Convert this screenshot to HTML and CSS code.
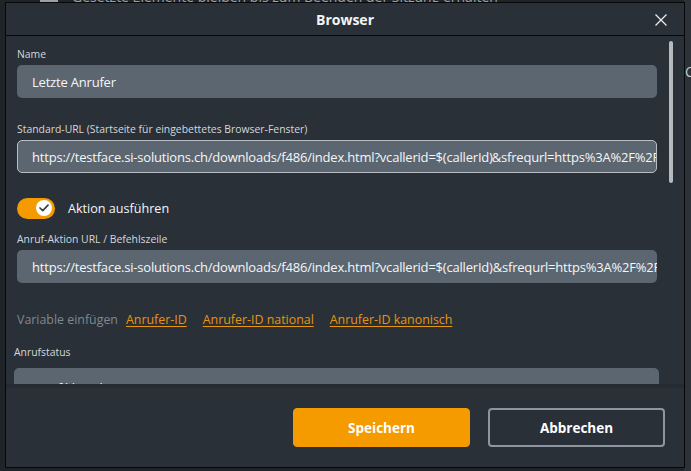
FILE: index.html
```html
<!DOCTYPE html>
<html lang="de">
<head>
<meta charset="utf-8">
<title>Browser</title>
<link rel="stylesheet" href="styles.css">
</head>
<body>
<div class="page">
  <div class="page-main">
    <div class="page-line"><span class="page-icon"></span>Gesetzte Elemente bleiben bis zum Beenden der Sitzung erhalten</div>
  </div>
  <div class="page-side"><span class="side-letter">C</span></div>
</div>

<div class="dialog">
  <div class="dlg-head">
    <span class="dlg-title">Browser</span>
    <button class="dlg-close" aria-label="Schliessen">
      <svg width="12" height="12" viewBox="0 0 12 12"><path d="M0.5 0.5 L11.5 11.5 M11.5 0.5 L0.5 11.5" stroke="#e8eaec" stroke-width="1.3" fill="none"/></svg>
    </button>
  </div>
  <div class="dlg-body">
    <div class="dlg-scroll">
      <div class="field">
        <label class="lbl">Name</label>
        <div class="input">Letzte Anrufer</div>
      </div>
      <div class="field">
        <label class="lbl">Standard-URL (Startseite für eingebettetes Browser-Fenster)</label>
        <div class="input focused">https://testface.si-solutions.ch/downloads/f486/index.html?vcallerid=$(callerId)<span class="caret"></span>&amp;sfrequrl=https%3A%2F%2Ftestface.si-solutions.ch</div>
      </div>
      <div class="toggle-row">
        <span class="toggle"><span class="knob"><svg width="10" height="8" viewBox="0 0 10 8"><path d="M1 4 L3.8 6.6 L9 1.2" stroke="#3a4048" stroke-width="1.7" fill="none" stroke-linecap="round" stroke-linejoin="round"/></svg></span></span>
        <span class="toggle-lbl">Aktion ausführen</span>
      </div>
      <div class="field">
        <label class="lbl">Anruf-Aktion URL / Befehlszeile</label>
        <div class="input">https://testface.si-solutions.ch/downloads/f486/index.html?vcallerid=$(callerId)&amp;sfrequrl=https%3A%2F%2Ftestface.si-solutions.ch</div>
      </div>
      <div class="vars">
        <span class="vars-lbl">Variable einfügen</span>
        <a class="var-link">Anrufer-ID</a>
        <a class="var-link">Anrufer-ID national</a>
        <a class="var-link">Anrufer-ID kanonisch</a>
      </div>
      <div class="field status">
        <label class="lbl">Anrufstatus</label>
        <div class="input select">
          <span>Anruf klingelt</span>
          <svg width="12" height="8" viewBox="0 0 12 8"><path d="M1 1.5 L6 6.5 L11 1.5" stroke="#c8ccd0" stroke-width="1.4" fill="none"/></svg>
        </div>
      </div>
    </div>
    <div class="scrollbar"></div>
  </div>
  <div class="dlg-foot">
    <button class="btn btn-primary">Speichern</button>
    <button class="btn btn-secondary">Abbrechen</button>
  </div>
</div>
</body>
</html>
```

FILE: styles.css
```css
* { box-sizing: border-box; }
html, body {
  margin: 0;
  padding: 0;
  width: 691px;
  height: 471px;
  overflow: hidden;
  background: #1f2428;
  font-family: "Open Sans", "Noto Sans", sans-serif;
  color: #eef0f2;
}
.page {
  display: flex;
  height: 471px;
}
.page-main {
  flex: 1;
  overflow: hidden;
}
.page-line {
  margin-top: -11px;
  padding-left: 40px;
  font-size: 14px;
  line-height: 16px;
  color: #9aa1a8;
  white-space: nowrap;
  display: flex;
  align-items: center;
  gap: 14px;
}
.page-icon {
  width: 18px;
  height: 14px;
  background: #9aa1a8;
}
.page-side {
  width: 7px;
  background: #2c3238;
  padding-top: 62px;
  overflow: hidden;
}
.side-letter {
  display: block;
  font-size: 14px;
  color: #c4c8cc;
  margin-left: 1px;
}

.dialog {
  position: absolute;
  left: 5px;
  top: 2px;
  width: 680px;
  height: 466px;
  background: #2a3038;
  border: 1px solid #060708;
  display: flex;
  flex-direction: column;
}
.dlg-head {
  height: 33px;
  flex: none;
  border-bottom: 1px solid #060708;
  display: flex;
  align-items: center;
  justify-content: center;
  position: relative;
}
.dlg-title {
  font-size: 14px;
  font-weight: 700;
  color: #f2f4f6;
}
.dlg-close {
  position: absolute;
  right: 16px;
  top: 10px;
  width: 14px;
  height: 14px;
  padding: 1px;
  border: 0;
  background: none;
  display: flex;
}
.dlg-body {
  height: 348px;
  flex: none;
  position: relative;
  overflow: hidden;
}
.dlg-scroll {
  padding: 10px 27px 0 11px;
}
.scrollbar {
  position: absolute;
  right: 11px;
  top: 5px;
  width: 4px;
  height: 142px;
  border-radius: 2px;
  background: #b5babf;
}
.field {
  display: flex;
  flex-direction: column;
}
.lbl {
  font-size: 10.4px;
  line-height: 16px;
  color: #d4d8dc;
  margin-bottom: 3px;
}
.input {
  height: 33px;
  border-radius: 5px;
  background: #5c6670;
  color: #f4f6f8;
  font-size: 13px;
  letter-spacing: -0.2px;
  padding: 0 15px;
  display: flex;
  align-items: center;
  white-space: nowrap;
  overflow: hidden;
  margin-bottom: 23px;
}
.input.focused {
  border: 1px solid #b8bec4;
  padding: 0 14px;
}
.caret {
  display: inline-block;
  width: 1px;
  height: 17px;
  background: #f4f6f8;
  margin: 0 -0.5px;
}
.toggle-row {
  display: flex;
  align-items: center;
  gap: 13px;
  height: 22px;
  margin-top: 1px;
  margin-bottom: 12px;
}
.toggle {
  width: 38px;
  height: 21px;
  border-radius: 11px;
  background: #f59b00;
  display: flex;
  align-items: center;
  justify-content: flex-end;
  padding-right: 3px;
}
.knob {
  width: 16px;
  height: 16px;
  border-radius: 50%;
  background: #ffffff;
  display: flex;
  align-items: center;
  justify-content: center;
}
.toggle-lbl {
  font-size: 12.6px;
  color: #f4f6f8;
}
.vars {
  display: flex;
  align-items: center;
  gap: 16px;
  height: 18px;
  margin-top: 4px;
  margin-bottom: 16px;
}
.vars-lbl {
  font-size: 12.4px;
  color: #7f8891;
  margin-right: -8px;
}
.var-link {
  font-size: 12.4px;
  color: #e9940a;
  text-decoration: underline;
  text-underline-offset: 2px;
  cursor: pointer;
}
.status {
  margin-left: -3px;
  margin-right: -2px;
}
.status .lbl {
  margin-bottom: 8px;
}
.select {
  height: 40px;
  justify-content: space-between;
  padding-right: 16px;
}
.dlg-foot {
  flex: 1;
  border-top: 4px solid #262b31;
  display: flex;
  justify-content: flex-end;
  align-items: flex-start;
  gap: 18px;
  padding: 20px 19px 0 0;
}
.btn {
  width: 177px;
  height: 39px;
  border-radius: 4px;
  font-family: "Open Sans", "Noto Sans", sans-serif;
  font-size: 13.5px;
  font-weight: 700;
  color: #ffffff;
  cursor: pointer;
}
.btn-primary {
  background: #f59b00;
  border: 1px solid #f59b00;
}
.btn-secondary {
  background: transparent;
  border: 2px solid #8d969e;
}
```
